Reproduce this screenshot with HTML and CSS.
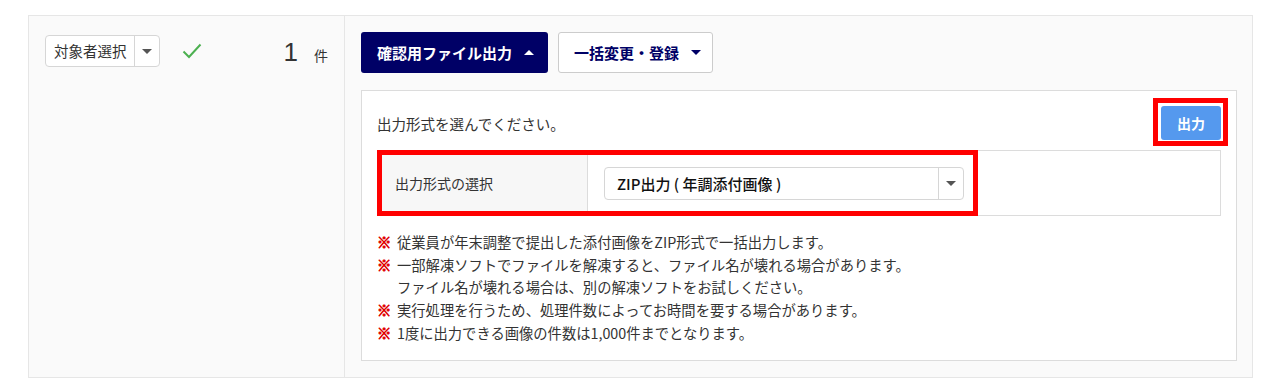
FILE: index.html
```html
<!DOCTYPE html>
<html lang="ja">
<head>
<meta charset="utf-8">
<link rel="stylesheet" href="styles.css">
</head>
<body>
<div class="wrap">
  <div class="left">
    <div class="mini-select">
      <span class="mini-label">対象者選択</span>
      <span class="mini-caret"><span class="tri-down"></span></span>
    </div>
    <svg class="check" width="20" height="16" viewBox="0 0 20 16"><path d="M1.5 8.5 L7 14 L18.5 1.5" fill="none" stroke="#4cb050" stroke-width="2"/></svg>
    <div class="count"><span class="num">1</span><span class="unit">件</span></div>
  </div>
  <div class="right">
    <div class="btns">
      <button class="btn-dark">確認用ファイル出力<span class="tri-up"></span></button>
      <button class="btn-light">一括変更・登録<span class="tri-down navy"></span></button>
    </div>
    <div class="panel">
      <div class="panel-head">
        <span class="prompt">出力形式を選んでください。</span>
        <button class="btn-out">出力</button>
      </div>
      <div class="tbl">
        <div class="tbl-label">出力形式の選択</div>
        <div class="tbl-value">
          <div class="sel">
            <span class="sel-text">ZIP出力 ( 年調添付画像 )</span>
            <span class="sel-caret"><span class="tri-down"></span></span>
          </div>
        </div>
        <div class="red-frame"></div>
      </div>
      <ul class="notes">
        <li><span class="mark">※</span><span>従業員が年末調整で提出した添付画像をZIP形式で一括出力します。</span></li>
        <li><span class="mark">※</span><span>一部解凍ソフトでファイルを解凍すると、ファイル名が壊れる場合があります。<br>ファイル名が壊れる場合は、別の解凍ソフトをお試しください。</span></li>
        <li><span class="mark">※</span><span>実行処理を行うため、処理件数によってお時間を要する場合があります。</span></li>
        <li><span class="mark">※</span><span>1度に出力できる画像の件数は1,000件までとなります。</span></li>
      </ul>
    </div>
  </div>
</div>
</body>
</html>
```

FILE: styles.css
```css
* { box-sizing: border-box; }
body {
  margin: 0;
  background: #fff;
  font-family: "Noto Sans CJK JP", "Noto Sans", sans-serif;
  font-size: 14px;
  color: #333;
}
.wrap {
  margin: 15px 0 0 28px;
  width: 1225px;
  border: 1px solid #e6e6e6;
  background: #fafafa;
  display: flex;
}
.left {
  width: 316px;
  flex: none;
  border-right: 1px solid #e6e6e6;
  padding: 19px 16px 0 16px;
  display: flex;
  align-items: flex-start;
}
.mini-select {
  display: flex;
  width: 115px;
  height: 32px;
  border: 1px solid #d6d6d6;
  border-radius: 4px;
  background: #fff;
}
.mini-label {
  width: 89px;
  padding-left: 8px;
  line-height: 30px;
  font-size: 14.5px;
  white-space: nowrap;
  border-right: 1px solid #d6d6d6;
}
.mini-caret {
  flex: 1;
  display: flex;
  align-items: center;
  justify-content: center;
}
.tri-down {
  display: inline-block;
  width: 0;
  height: 0;
  border-left: 5px solid transparent;
  border-right: 5px solid transparent;
  border-top: 5px solid #555;
}
.tri-down.navy { border-top-color: #000066; margin-left: 12px; }
.tri-up {
  display: inline-block;
  width: 0;
  height: 0;
  border-left: 5px solid transparent;
  border-right: 5px solid transparent;
  border-bottom: 5px solid #fff;
  margin-left: 12px;
}
.check {
  margin: 8px 0 0 22px;
}
.count {
  margin-left: auto;
  display: flex;
  align-items: baseline;
  margin-top: 2px;
}
.num {
  font-family: "Liberation Sans", Arial, sans-serif;
  font-size: 26px;
  line-height: 30px;
  margin-right: 2px;
}
.unit {
  margin-left: 14px;
  font-size: 14px;
}
.right {
  flex: 1;
  padding: 16px 15px 16px 16px;
}
.btns {
  display: flex;
  gap: 10px;
  margin-bottom: 17px;
}
button {
  font-family: inherit;
  cursor: pointer;
}
.btn-dark {
  width: 187px;
  height: 41px;
  background: #000066;
  color: #fff;
  border: none;
  border-radius: 3px;
  font-size: 15px;
  font-weight: bold;
  display: flex;
  align-items: center;
  padding: 0 0 0 16px;
}
.btn-light {
  width: 155px;
  height: 41px;
  background: #fff;
  color: #000066;
  border: 1px solid #ccc;
  border-radius: 3px;
  font-size: 15px;
  font-weight: bold;
  display: flex;
  align-items: center;
  padding: 0 0 0 15px;
}
.panel {
  background: #fff;
  border: 1px solid #dcdcdc;
  padding: 15px 15px 16px 15px;
}
.panel-head {
  display: flex;
  align-items: center;
  justify-content: space-between;
  height: 34px;
  margin-bottom: 10px;
}
.prompt {
  font-size: 14.5px;
}
.btn-out {
  position: relative;
  width: 60px;
  height: 34px;
  background: #5599ee;
  color: #fff;
  border: none;
  border-radius: 3px;
  font-size: 14px;
  font-weight: bold;
}
.btn-out::after {
  content: "";
  position: absolute;
  left: -8px;
  top: -8px;
  right: -7px;
  bottom: -6px;
  border: 5px solid #ff0000;
}
.tbl {
  position: relative;
  display: flex;
  height: 66px;
  border: 1px solid #dcdcdc;
}
.tbl-label {
  width: 210px;
  background: #f7f7f7;
  border-right: 1px solid #dcdcdc;
  display: flex;
  align-items: center;
  padding-left: 17px;
  font-size: 14px;
}
.tbl-value {
  flex: 1;
  display: flex;
  align-items: center;
  padding-left: 16px;
}
.sel {
  display: flex;
  width: 360px;
  height: 33px;
  border: 1px solid #d6d6d6;
  border-radius: 4px;
  background: #fff;
}
.sel-text {
  flex: 1;
  padding-left: 12px;
  line-height: 31px;
  font-weight: 500;
  font-size: 15px;
  color: #111;
  white-space: pre;
  border-right: 1px solid #d6d6d6;
}
.sel-caret {
  width: 24px;
  display: flex;
  align-items: center;
  justify-content: center;
}
.red-frame {
  position: absolute;
  left: -1px;
  top: -1px;
  width: 601px;
  height: 66px;
  border: 5px solid #ff0000;
}
.notes {
  list-style: none;
  margin: 15px 0 0 0;
  padding: 0;
}
.notes li {
  display: flex;
  line-height: 22px;
  margin-bottom: 1px;
  font-size: 14.3px;
}
.notes li:last-child { margin-bottom: 0; }
.mark {
  width: 20px;
  flex: none;
  color: #e00000;
  font-weight: 900;
  -webkit-text-stroke: 0.8px #e00000;
}
```
